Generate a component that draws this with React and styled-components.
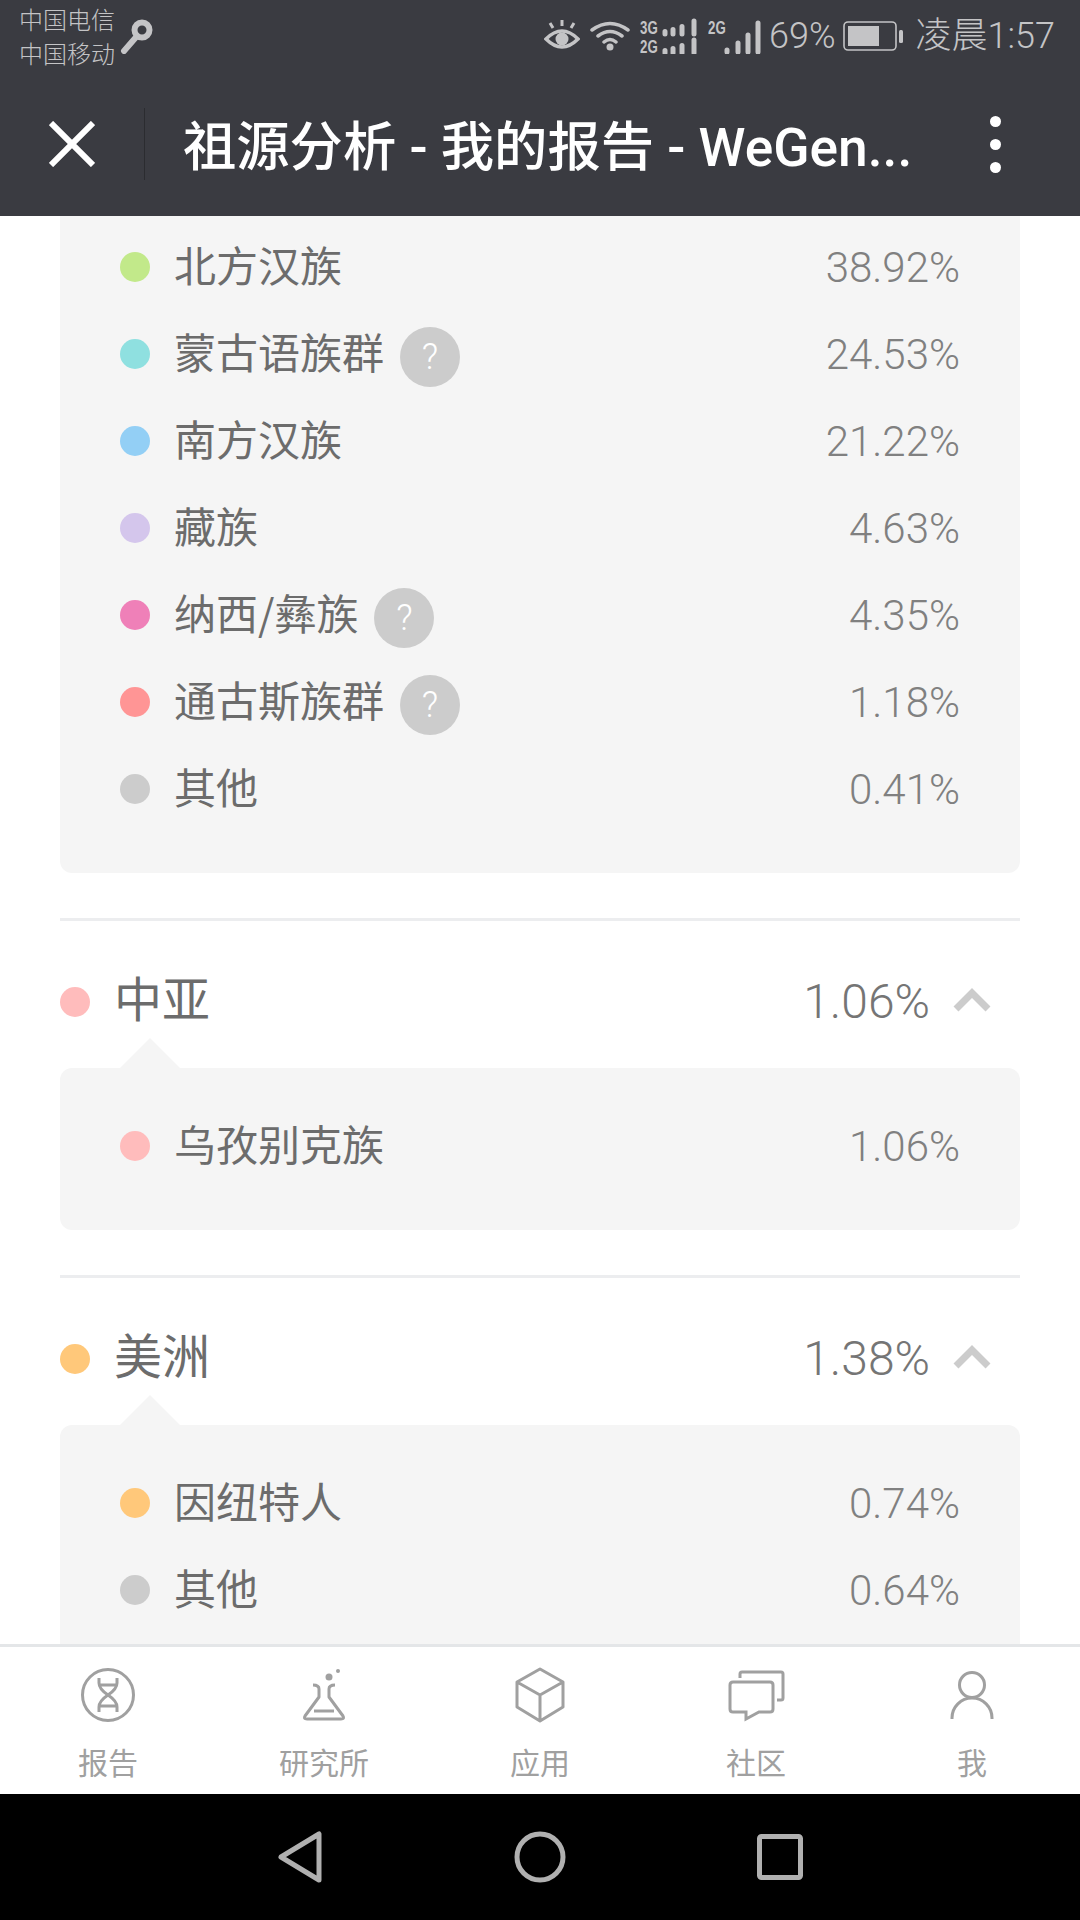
import React from "react";
import styled, { createGlobalStyle } from "styled-components";

const GlobalStyle = createGlobalStyle`
  html, body {
    margin: 0;
    padding: 0;
    background: #fff;
  }
  * {
    box-sizing: border-box;
  }
`;

const CJK = `"Noto Sans CJK SC", sans-serif`;
const NUM = `Roboto, "Noto Sans CJK SC", sans-serif`;

const Screen = styled.div`
  width: 1080px;
  height: 1920px;
  display: flex;
  flex-direction: column;
  overflow: hidden;
  background: #fff;
`;

const Top = styled.header`
  height: 216px;
  flex: none;
  background: #3a3b41;
  color: #fff;
`;

const StatusBar = styled.div`
  height: 72px;
  padding: 0 25px 0 19px;
  display: flex;
  align-items: center;
  color: #c4c4c6;
`;

const Carriers = styled.div`
  font: 300 24px/34px ${CJK};
`;

const KeyIcon = styled.svg`
  margin: 0 0 0 5px;
`;

const StatusRight = styled.div`
  margin-left: auto;
  display: flex;
  align-items: center;
  gap: 10px;
`;

const StatusText = styled.span`
  font: 300 36px/40px ${NUM};
  margin-left: ${(p) => p.$left || 0}px;
  margin-right: ${(p) => p.$right || 0}px;
`;

const TitleBar = styled.div`
  height: 144px;
  display: flex;
  align-items: center;
`;

const CloseBox = styled.div`
  width: 145px;
  height: 72px;
  flex: none;
  display: flex;
  align-items: center;
  justify-content: center;
  border-right: 1px solid #2b2c30;
`;

const Title = styled.div`
  margin: 8px 0 0 38px;
  width: 741px;
  font: 500 53.3px/60px ${NUM};
  white-space: nowrap;
`;

const MoreDots = styled.div`
  margin-left: 66px;
  display: flex;
  flex-direction: column;
  gap: 12px;
  span {
    width: 11px;
    height: 11px;
    border-radius: 50%;
    background: #fff;
  }
`;

const Content = styled.main`
  flex: 1;
  overflow: hidden;
  padding: 0 60px;
`;

const Card = styled.div`
  position: relative;
  background: #f5f5f5;
  border-radius: 12px;
  padding: ${(p) => (p.$first ? "7px" : "34px")} 0 41px;
  ${(p) => p.$first && "border-top-left-radius: 0; border-top-right-radius: 0;"}
  ${(p) =>
    !p.$first &&
    `&::before {
      content: "";
      position: absolute;
      left: 60px;
      top: -30px;
      border-left: 30px solid transparent;
      border-right: 30px solid transparent;
      border-bottom: 30px solid #f5f5f5;
    }`}
`;

const Row = styled.div`
  height: 87px;
  display: flex;
  align-items: center;
  padding: 0 60px 0 60px;
`;

const Dot = styled.i`
  width: 30px;
  height: 30px;
  flex: none;
  border-radius: 50%;
  background: ${(p) => p.$color};
`;

const RowName = styled.span`
  margin: 0 0 6px 24px;
  font: 400 42px/50px ${CJK};
  color: #6c6c6c;
`;

const Help = styled.span`
  width: 60px;
  height: 60px;
  margin: 7px 0 0 16px;
  border-radius: 50%;
  background: #ccc;
  color: #fff;
  display: flex;
  align-items: center;
  justify-content: center;
  font: 300 36px/1 Roboto, sans-serif;
`;

const RowValue = styled.span`
  margin: 2px 0 0 auto;
  font: 300 42px/50px ${NUM};
  color: #808080;
`;

const Section = styled.section`
  margin-top: 45px;
  border-top: 3px solid #ecedef;
  padding-top: 31px;
`;

const SectionHead = styled.div`
  height: 100px;
  margin-bottom: 16px;
  display: flex;
  align-items: center;
`;

const SectionName = styled.span`
  margin: 0 0 12px 24px;
  font: 400 48px/60px ${CJK};
  color: #6c6c6c;
`;

const SectionValue = styled.span`
  margin-left: auto;
  font: 300 48px/60px ${NUM};
  color: #757575;
`;

const Chevron = styled.svg`
  margin: 0 29px 4px 23px;
`;

const TabBar = styled.nav`
  height: 150px;
  flex: none;
  display: grid;
  grid-template-columns: repeat(5, 216px);
  border-top: 3px solid #e4e6e8;
  background: #fff;
`;

const Tab = styled.div`
  display: flex;
  flex-direction: column;
  align-items: center;
  padding-top: 19px;
  color: #a0a0a0;
  font: 400 30px/36px ${CJK};
  svg {
    margin-bottom: 19px;
  }
`;

const NavBar = styled.div`
  height: 126px;
  flex: none;
  background: #000;
  display: flex;
  justify-content: center;
  align-items: center;
  gap: 191px;
`;

const nodes = [
  { name: "北方汉族", value: "38.92%", color: "#c2e98a" },
  { name: "蒙古语族群", value: "24.53%", color: "#8fe0e0", help: true },
  { name: "南方汉族", value: "21.22%", color: "#93cff5" },
  { name: "藏族", value: "4.63%", color: "#d4c6ec" },
  { name: "纳西/彝族", value: "4.35%", color: "#ef80b8", help: true },
  { name: "通古斯族群", value: "1.18%", color: "#ff9595", help: true },
  { name: "其他", value: "0.41%", color: "#ccc" },
];

const groups = [
  {
    name: "中亚",
    value: "1.06%",
    color: "#ffbcbc",
    rows: [{ name: "乌孜别克族", value: "1.06%", color: "#ffbcbc" }],
  },
  {
    name: "美洲",
    value: "1.38%",
    color: "#ffc87a",
    rows: [
      { name: "因纽特人", value: "0.74%", color: "#ffc87a" },
      { name: "其他", value: "0.64%", color: "#ccc" },
    ],
  },
];

const ico = { fill: "none", stroke: "#a0a0a0", strokeWidth: 3 };
const netLabel = {
  fill: "#c4c4c6",
  fontFamily: "Liberation Sans",
  fontWeight: 700,
  fontSize: 19,
};

const Rows = ({ items }) =>
  items.map((r) => (
    <Row key={r.name}>
      <Dot $color={r.color} />
      <RowName>{r.name}</RowName>
      {r.help && <Help>?</Help>}
      <RowValue>{r.value}</RowValue>
    </Row>
  ));

export default function App() {
  return (
    <Screen>
      <GlobalStyle />
      <Top>
        <StatusBar>
          <Carriers>
            中国电信
            <br />
            中国移动
          </Carriers>
          <KeyIcon width="34" height="36" viewBox="0 0 34 36">
            <circle cx="22" cy="12" r="7.5" fill="none" stroke="#c4c4c6" strokeWidth="6" />
            <path d="M17 18L4 33" stroke="#c4c4c6" strokeWidth="6" strokeLinecap="round" />
          </KeyIcon>
          <StatusRight>
            <svg width="36" height="32" viewBox="0 0 36 32">
              <path d="M2 19Q18 3 34 19Q18 35 2 19Z" fill="none" stroke="#c4c4c6" strokeWidth="3.5" />
              <circle cx="18" cy="19" r="6.5" fill="#c4c4c6" />
              <path d="M18 0V6M6 3L9 8M30 3L27 8" stroke="#c4c4c6" strokeWidth="3" />
            </svg>
            <svg width="40" height="30" viewBox="0 0 40 30">
              <path d="M2 9Q20 -4 38 9M8 15Q20 6 32 15M14 21Q20 16 26 21" fill="none" stroke="#c4c4c6" strokeWidth="3.5" strokeLinecap="round" />
              <circle cx="20" cy="26" r="3.5" fill="#c4c4c6" />
            </svg>
            <svg width="58" height="36" viewBox="0 0 58 36">
              <text transform="translate(0 16) scale(0.7 1)" {...netLabel}>3G</text>
              <text transform="translate(0 35) scale(0.7 1)" {...netLabel}>2G</text>
              <path d="M25 13.5v2.5M33 11.5v4.5M42 8.5v7.5M54 3v13M25 32.5v2.5M33 30.5v4.5M42 27.5v7.5M54 22v13" stroke="#c4c4c6" strokeWidth="5" strokeLinecap="round" />
            </svg>
            <svg width="54" height="36" viewBox="0 0 54 36">
              <text transform="translate(0 16) scale(0.7 1)" {...netLabel}>2G</text>
              <path d="M19 32v2M30 25v9M40 17v17M50 5v29" stroke="#c4c4c6" strokeWidth="5" strokeLinecap="round" />
            </svg>
            <StatusText $left={-3} $right={-3}>69%</StatusText>
            <svg width="60" height="30" viewBox="0 0 60 30">
              <rect x="1" y="1" width="52" height="28" rx="4" fill="none" stroke="#c4c4c6" strokeWidth="1.6" />
              <rect x="5" y="5" width="31" height="20" fill="#c4c4c6" />
              <rect x="56" y="9" width="4" height="13" rx="1.5" fill="#c4c4c6" />
            </svg>
            <StatusText $left={3}>凌晨1:57</StatusText>
          </StatusRight>
        </StatusBar>
        <TitleBar>
          <CloseBox>
            <svg width="46" height="46" viewBox="0 0 46 46">
              <path d="M2 2L44 44M44 2L2 44" stroke="#fff" strokeWidth="6" />
            </svg>
          </CloseBox>
          <Title>祖源分析 - 我的报告 - WeGen...</Title>
          <MoreDots>
            <span />
            <span />
            <span />
          </MoreDots>
        </TitleBar>
      </Top>
      <Content>
        <Card $first>
          <Rows items={nodes} />
        </Card>
        {groups.map((g) => (
          <Section key={g.name}>
            <SectionHead>
              <Dot $color={g.color} />
              <SectionName>{g.name}</SectionName>
              <SectionValue>{g.value}</SectionValue>
              <Chevron width="38" height="24" viewBox="0 0 38 24">
                <path d="M3 21L19 5L35 21" fill="none" stroke="#ccc" strokeWidth="7" />
              </Chevron>
            </SectionHead>
            <Card>
              <Rows items={g.rows} />
            </Card>
          </Section>
        ))}
      </Content>
      <TabBar>
        <Tab>
          <svg width="60" height="58" viewBox="0 0 60 58" {...ico}>
            <circle cx="30" cy="29" r="25.5" />
            <path d="M21 12V17Q21 23 30 29Q39 35 39 41V46M39 12V17Q39 23 30 29Q21 35 21 41V46M21 19H39M21 40H39" />
          </svg>
          报告
        </Tab>
        <Tab>
          <svg width="60" height="58" viewBox="0 0 60 58" {...ico}>
            <path d="M19 19Q25 19 25 23V31L11 50Q9 53 13 53H47Q51 53 49 50L35 31V23Q35 19 41 19" strokeLinejoin="round" />
            <path d="M20 45H40" />
            <circle cx="35" cy="11" r="3.5" fill="#a0a0a0" stroke="none" />
            <circle cx="44" cy="5" r="2" fill="#a0a0a0" stroke="none" />
          </svg>
          研究所
        </Tab>
        <Tab>
          <svg width="60" height="58" viewBox="0 0 60 58" {...ico}>
            <path d="M30 3L53 16V41L30 55L7 41V16ZM7 16L30 29L53 16M30 29V55" strokeLinejoin="round" />
          </svg>
          应用
        </Tab>
        <Tab>
          <svg width="60" height="58" viewBox="0 0 60 58" {...ico}>
            <path d="M14 12V8Q14 6 16 6H55Q57 6 57 8V32Q57 34 55 34H51" />
            <path d="M7 16H44Q47 16 47 19V43Q47 46 44 46H33L20 53V46H7Q4 46 4 43V19Q4 16 7 16Z" />
          </svg>
          社区
        </Tab>
        <Tab>
          <svg width="60" height="58" viewBox="0 0 60 58" {...ico}>
            <circle cx="30" cy="19" r="12.5" />
            <path d="M10 53V52A20 20 0 0 1 50 52V53" />
          </svg>
          我
        </Tab>
      </TabBar>
      <NavBar>
        <svg width="46" height="54" viewBox="0 0 46 54">
          <path d="M42 4V50L4 27Z" fill="none" stroke="#b0b0b0" strokeWidth="5" strokeLinejoin="round" />
        </svg>
        <svg width="52" height="52" viewBox="0 0 52 52">
          <circle cx="26" cy="26" r="23" fill="none" stroke="#b0b0b0" strokeWidth="5" />
        </svg>
        <svg width="46" height="46" viewBox="0 0 46 46">
          <rect x="2.5" y="2.5" width="41" height="41" rx="2" fill="none" stroke="#b0b0b0" strokeWidth="5" />
        </svg>
      </NavBar>
    </Screen>
  );
}
